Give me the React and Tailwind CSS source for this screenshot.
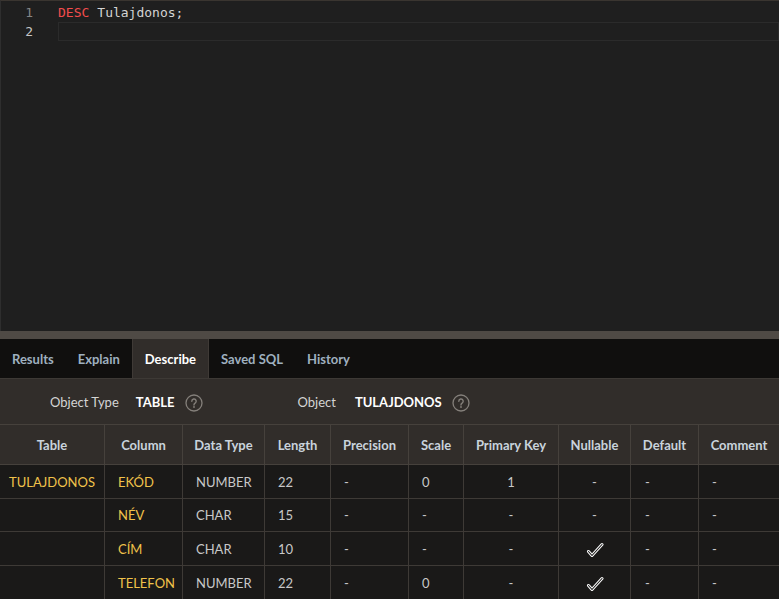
import React from "react";

const columns = [
  { label: "Table", w: "w-[104px]" },
  { label: "Column", w: "w-[78px]" },
  { label: "Data Type", w: "w-[82px]" },
  { label: "Length", w: "w-[66px]" },
  { label: "Precision", w: "w-[78px]" },
  { label: "Scale", w: "w-[55px]" },
  { label: "Primary Key", w: "w-[95px]" },
  { label: "Nullable", w: "w-[72px]" },
  { label: "Default", w: "w-[68px]" },
  { label: "Comment", w: "flex-1" },
];

const rows = [
  ["TULAJDONOS", "EKÓD", "NUMBER", "22", "-", "0", "1", "-", "-", "-"],
  ["", "NÉV", "CHAR", "15", "-", "-", "-", "-", "-", "-"],
  ["", "CÍM", "CHAR", "10", "-", "-", "-", "check", "-", "-"],
  ["", "TELEFON", "NUMBER", "22", "-", "0", "-", "check", "-", "-"],
];

const rowHeights = ["h-[34px]", "h-[33px]", "h-[34px]", "h-[34px]"];

const HelpIcon = () => (
  <svg width="18" height="18" viewBox="0 0 18 18" className="text-[#85807b]">
    <circle cx="9" cy="9" r="8" fill="none" stroke="currentColor" strokeWidth="1.3" />
    <path d="M6.8 7.2a2.2 2.2 0 1 1 3.3 1.9c-.7.4-1.1.8-1.1 1.6v.4" fill="none" stroke="currentColor" strokeWidth="1.4" strokeLinecap="round" />
    <circle cx="9" cy="13" r="0.9" fill="currentColor" />
  </svg>
);

const Check = () => (
  <svg width="18" height="16" viewBox="0 0 18 16" className="mx-auto">
    <path d="M2.5 9.5l3.5 4L16 2.5" fill="none" stroke="#ffffff" strokeWidth="3" strokeLinecap="round" strokeLinejoin="round" />
    <path d="M2.5 9.5l3.5 4L16 2.5" fill="none" stroke="#1a1918" strokeWidth="1.1" strokeLinecap="round" strokeLinejoin="round" />
  </svg>
);

// where each cell's content sits inside its column
const cellAlign = [
  "justify-center",
  "pl-[13px]",
  "pl-[13px]",
  "pl-[13px]",
  "pl-[13px]",
  "pl-[13px]",
  "justify-center",
  "justify-center",
  "pl-[14px]",
  "pl-[13px]",
];

export default function App() {
  const tabs = ["Results", "Explain", "Describe", "Saved SQL", "History"];
  return (
    <div className="w-[779px] h-[599px] overflow-hidden flex flex-col bg-[#1a1918] font-['Lato',sans-serif]">
      {/* Editor */}
      <div className="h-[331px] shrink-0 bg-[#1f1f1f] border-t border-t-[#3a3530] border-l border-l-[#2e2e2e] flex flex-col pt-[3px] font-['DejaVu_Sans_Mono',monospace] text-[13px]">
        <div className="flex h-[18px] items-center">
          <span className="w-[32px] text-right text-[#858585]">1</span>
          <span className="ml-[25px] text-[#f14c4c]">DESC</span>
          <span className="ml-[8px] text-[#d4d4d4]">Tulajdonos;</span>
        </div>
        <div className="flex h-[19px] items-center">
          <span className="w-[32px] text-right text-[#c6c6c6]">2</span>
          <div className="ml-[25px] flex-1 h-[19px] border border-[#2b2b2b]" />
        </div>
      </div>
      {/* Splitter */}
      <div className="h-[8px] shrink-0 bg-[#4f4a45]" />
      {/* Tabs */}
      <div className="h-[40px] shrink-0 bg-[#100f0e] flex border-b border-[#3d3935] text-[13px] font-bold">
        {tabs.map((t) => (
          <div
            key={t}
            className={
              t === "Describe"
                ? "px-[12px] pt-[3px] flex items-center bg-[#312d2a] text-white border-l border-r border-[#3f3a36]"
                : "px-[12px] pt-[3px] flex items-center text-[#9fb0bf]"
            }
          >
            {t}
          </div>
        ))}
      </div>
      {/* Object info */}
      <div className="h-[45px] shrink-0 bg-[#312d2a] flex items-center pt-[2px] text-[13px]">
        <span className="ml-[50px] text-[#d4d4d4]">Object Type</span>
        <span className="ml-[17px] font-bold text-white">TABLE</span>
        <span className="ml-[11px]"><HelpIcon /></span>
        <span className="ml-[94px] text-[#d4d4d4]">Object</span>
        <span className="ml-[19px] font-bold text-white">TULAJDONOS</span>
        <span className="ml-[10px]"><HelpIcon /></span>
      </div>
      {/* Table */}
      <div className="flex flex-col text-[13px] border-t border-[#46413c]">
        <div className="flex h-[40px] bg-[#312d2a] border-b border-[#46413c]">
          {columns.map((c, i) => (
            <div
              key={c.label}
              className={`${c.w} shrink-0 flex items-center justify-center pt-[2px] font-bold text-[#c9d3dc] ${i > 0 ? "border-l border-[#46413c]" : ""}`}
            >
              {c.label}
            </div>
          ))}
        </div>
        {rows.map((r, ri) => (
          <div key={ri} className={`flex ${rowHeights[ri]} border-b border-[#3e3a36] bg-[#1a1918]`}>
            {r.map((v, i) => (
              <div
                key={i}
                className={`${columns[i].w} shrink-0 flex items-center pt-[2px] ${cellAlign[i]} ${i > 0 ? "border-l border-[#3e3a36]" : ""} ${i < 2 ? "text-[#f0c24a]" : "text-[#c8c8c8]"}`}
              >
                {v === "check" ? <Check /> : v}
              </div>
            ))}
          </div>
        ))}
      </div>
    </div>
  );
}
